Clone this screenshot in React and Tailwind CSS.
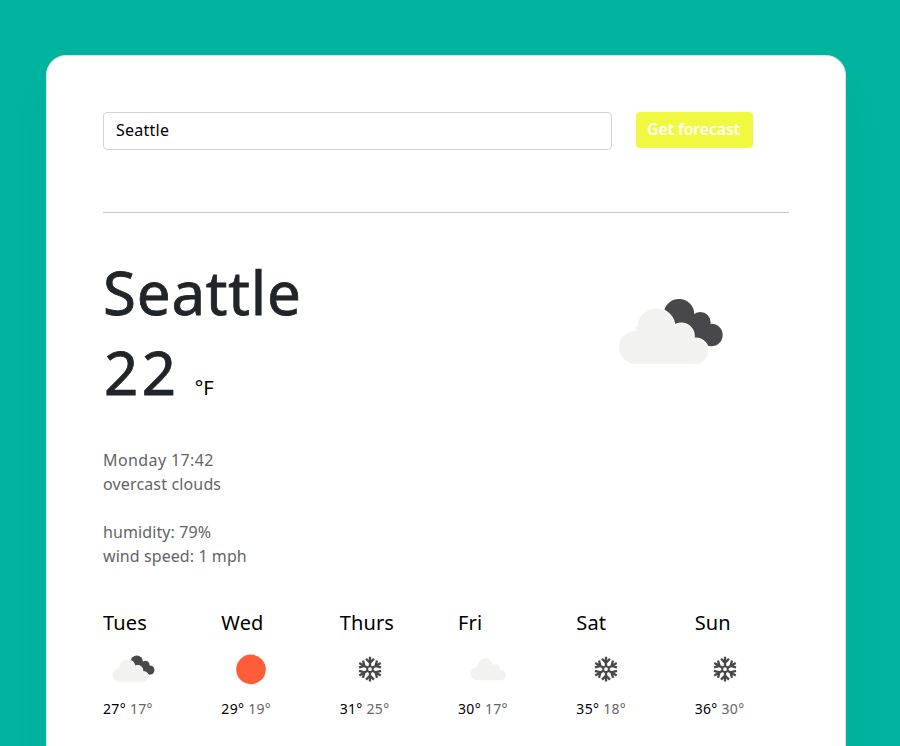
const LIGHT = '#f2f2f0';
const DARK = '#48484a';

function LightCloud() {
  return (
    <g>
      <circle cx="106" cy="202" r="49" />
      <circle cx="168" cy="142" r="56" />
      <circle cx="244" cy="168" r="38" />
      <circle cx="287" cy="213" r="38" />
      <path d="M106 140H250L290 200V251H106Z" />
    </g>
  );
}

function BrokenClouds() {
  return (
    <g>
      <g fill={DARK}>
        <circle cx="237" cy="103" r="46" />
        <circle cx="301" cy="127" r="31" />
        <circle cx="334" cy="165" r="34" />
        <path d="M237 100L301 110L345 165L330 199L237 160Z" />
      </g>
      <g fill="#fff" stroke="#fff" strokeWidth="5"><LightCloud /></g>
      <g fill={LIGHT}><LightCloud /></g>
    </g>
  );
}

function Snowflake() {
  return (
    <g fill="none" stroke={DARK} strokeWidth="2.3">
      <circle cx="30" cy="30.2" r="2.8" strokeWidth="1.8" />
      {[0, 60, 120, 180, 240, 300].map((a) => (
        <path key={a} transform={`rotate(${a} 30 30.2)`} d="M30 27.2V17.8M26 19.8L30 23.8L34 19.8" />
      ))}
    </g>
  );
}

function DayIcon({ kind }) {
  return (
    <svg viewBox="0 0 60 60" className="block size-[60px]">
      {kind === 'broken' && (
        <g transform="translate(1.8 8.8) scale(.135)"><BrokenClouds /></g>
      )}
      {kind === 'sun' && <circle cx="30" cy="30.4" r="14.8" fill="#ff5c39" />}
      {kind === 'snow' && <Snowflake />}
      {kind === 'cloud' && (
        <g transform="translate(5 8) scale(.132)" fill={LIGHT}><LightCloud /></g>
      )}
    </svg>
  );
}

const days = [
  { name: 'Tues', icon: 'broken', high: 27, low: 17 },
  { name: 'Wed', icon: 'sun', high: 29, low: 19 },
  { name: 'Thurs', icon: 'snow', high: 31, low: 25 },
  { name: 'Fri', icon: 'cloud', high: 30, low: 17 },
  { name: 'Sat', icon: 'snow', high: 35, low: 18 },
  { name: 'Sun', icon: 'snow', high: 36, low: 30 },
];

export default function App() {
  return (
    <div className="h-[746px] overflow-hidden bg-[#00b49f] pt-[55px] pl-[46px] font-['Noto_Sans',sans-serif] text-base text-[#212529]">
      <main className="h-[800px] w-[800px] rounded-[20px] border border-[#dfdfdf] bg-white px-14 pt-14 shadow-[0_30px_50px_rgba(65,50,100,0.03)]">
        <form className="flex items-start gap-6" onSubmit={(e) => e.preventDefault()}>
          <input
            defaultValue="Seattle"
            className="h-[38px] w-[509px] rounded border border-[#ced4da] px-3 pb-0.5 text-base tracking-[0.25px] text-black outline-none"
          />
          <button className="h-9 w-[117px] rounded bg-[#f0f940] pr-0.5 pb-0.5 text-base font-semibold tracking-[-0.2px] whitespace-nowrap text-white">
            Get forecast
          </button>
        </form>
        <hr className="mt-[62px] border-t border-[#c8c8c8]" />
        <section className="flex justify-between">
          <div>
            <h1 className="mt-[39px] h-20 text-[60px] leading-[80px] tracking-[0.8px] [-webkit-text-stroke:0.8px_#212529]">Seattle</h1>
            <div className="flex h-[82px] items-baseline leading-[80px]">
              <span className="pl-px text-[60px] tracking-[3.5px] [-webkit-text-stroke:0.8px_#212529]">22</span>
              <span className="ml-[15px] text-xl text-black">°F</span>
            </div>
          </div>
          <svg viewBox="0 0 420 300" className="mt-[67px] mr-[49px] h-[100px] w-[140px]">
            <BrokenClouds />
          </svg>
        </section>
        <div className="mt-[34px] leading-6 text-[#636466]">
          <p className="tracking-[0.4px]">Monday 17:42</p>
          <p className="tracking-[0.15px]">overcast clouds</p>
          <p className="mt-6 tracking-[0.1px]">humidity: 79%</p>
          <p className="tracking-[0.08px]">wind speed: 1 mph</p>
        </div>
        <div className="mt-10 grid w-[710px] grid-cols-6">
          {days.map((d) => (
            <div key={d.name}>
              <h2 className="h-[31px] text-xl leading-[30px] tracking-[0.15px] text-black">{d.name}</h2>
              <DayIcon kind={d.icon} />
              <p className="text-sm leading-5 tracking-[0.3px] text-[#636466]">
                <span className="text-black">{d.high}°</span> {d.low}°
              </p>
            </div>
          ))}
        </div>
      </main>
    </div>
  );
}
